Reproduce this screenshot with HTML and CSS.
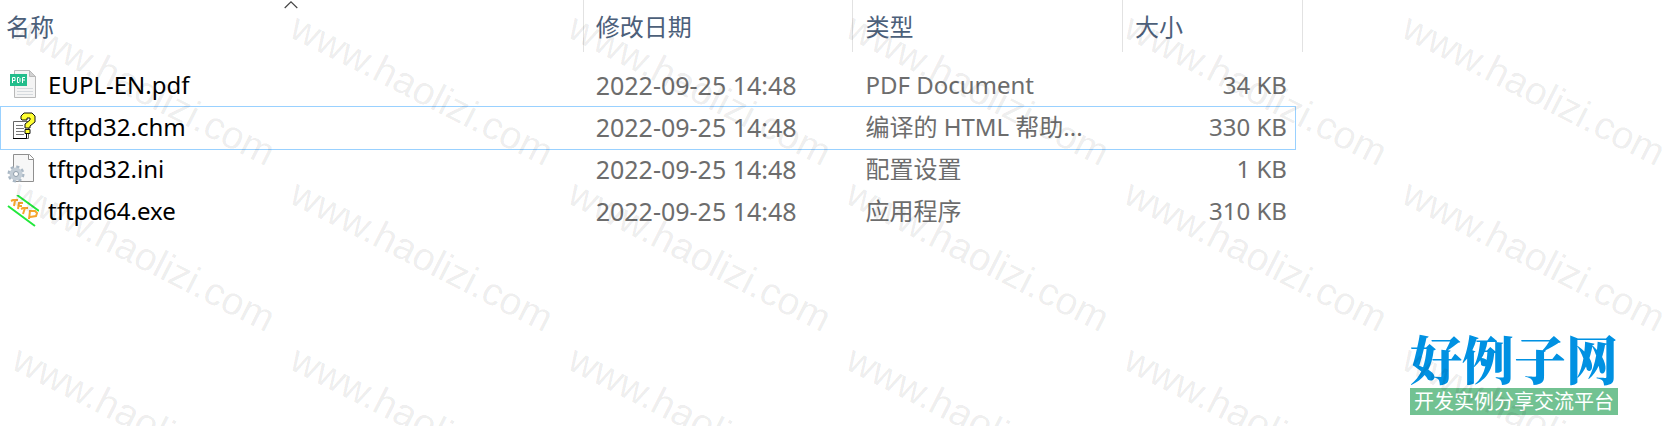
FILE: index.html
```html
<!DOCTYPE html>
<html lang="zh-CN">
<head>
  <meta charset="UTF-8" />
  <meta name="viewport" content="width=device-width, initial-scale=1.0"/>
  <title>tftpd64</title>
  <link rel="stylesheet" href="styles.css">
</head>
<body>
  <table class="files">
    <colgroup>
      <col class="col-name">
      <col class="col-date">
      <col class="col-type">
      <col class="col-size">
    </colgroup>
    <thead>
      <tr>
        <th aria-sort="ascending">
          <button type="button">名称</button>
          <svg class="sort" width="14" height="8" viewBox="0 0 14 8"><path d="M.7 7 7 .9 13.3 7" fill="none" stroke="#444" stroke-width="1.2"/></svg>
        </th>
        <th><button type="button">修改日期</button></th>
        <th><button type="button">类型</button></th>
        <th><button type="button">大小</button></th>
      </tr>
    </thead>
    <tbody>
      <tr>
        <td>
          <div class="name">
            <svg class="icon" width="32" height="32" viewBox="0 0 32 32">
              <path d="M7.5 1.500h15l6 6v21h-21z" fill="#f4f4f4" stroke="#b9b9b9"/>
              <path d="M22.500 1.500v6h6z" fill="#d2d2d2" stroke="#b9b9b9"/>
              <path d="M10 19.500h16M10 22.500h16M10 25.500h16" stroke="#d5d9dd"/>
              <path d="M3 5h17v12H3z" fill="#22bd8b"/>
              <path d="M5.500 14V8.500h2.500v3H5.500M10.500 8.500v5h1.500l1-1v-3l-1-1zM15.500 14V8.500H18M15.500 11H18" fill="none" stroke="#fff"/>
            </svg>
            EUPL-EN.pdf
          </div>
        </td>
        <td class="date">2022-09-25 14:48</td>
        <td>PDF Document</td>
        <td>34 KB</td>
      </tr>
      <tr class="selected">
        <td>
          <div class="name">
            <svg class="icon" width="32" height="32" viewBox="0 0 32 32">
              <path d="M6.500 10.500h15v17h-15z" fill="#fff" stroke="#666"/>
              <path d="M6 27.500h13.500v-5" fill="none" stroke="#000"/>
              <path d="M9 14.500h7M9 17.500h8M9 20.500h8M9 23.500h8" stroke="#777"/>
              <path d="M14 8V5l3-3h8l3 3v6l-5 4v2h-5v-4l5-4V7h-3v2h-5zM18 18.500h5v4h-5z" fill="#ffff32" stroke="#111"/>
            </svg>
            tftpd32.chm
          </div>
        </td>
        <td class="date">2022-09-25 14:48</td>
        <td>编译的 HTML 帮助...</td>
        <td>330 KB</td>
      </tr>
      <tr>
        <td>
          <div class="name">
            <svg class="icon" width="32" height="32" viewBox="0 0 32 32">
              <path d="M6.500 1.500h16l4 4v23h-20z" fill="#f7f7f7" stroke="#8f8f8f"/>
              <path d="M21.500 1.500v5h5" fill="#fff" stroke="#8f8f8f"/>
              <circle cx="9" cy="21" r="7" fill="none" stroke="#a9b7c4" stroke-width="3" stroke-dasharray="3 2.500"/>
              <circle cx="9" cy="21" r="4.500" fill="#eef2f5" stroke="#c3cdd6" stroke-width="4"/>
              <circle cx="9" cy="21" r="2.500" fill="#fff" stroke="#8c9ba8"/>
            </svg>
            tftpd32.ini
          </div>
        </td>
        <td class="date">2022-09-25 14:48</td>
        <td>配置设置</td>
        <td>1 KB</td>
      </tr>
      <tr>
        <td>
          <div class="name">
            <svg class="icon" width="32" height="32" viewBox="0 0 32 32">
              <path d="M10 0 32 16M1 11l27 20" stroke="#22e83c" stroke-width="2"/>
              <path d="M4 6l2-1h5M8 5l-1 6M11 14l1-6h4M11 11h4M14 14l2-1h5M18 13l-2 6M22 24l1-8h5l2 2-1 3-6 1" fill="none" stroke="#f5a52d" stroke-width="2"/>
            </svg>
            tftpd64.exe
          </div>
        </td>
        <td class="date">2022-09-25 14:48</td>
        <td>应用程序</td>
        <td>310 KB</td>
      </tr>
    </tbody>
  </table>

  <div class="brand">
    <div class="brand-name">好例子网</div>
    <div class="brand-slogan">开发实例分享交流平台</div>
  </div>

  <div class="watermark" aria-hidden="true">
    <span>www.haolizi.com</span><span>www.haolizi.com</span><span>www.haolizi.com</span>
    <span>www.haolizi.com</span><span>www.haolizi.com</span><span>www.haolizi.com</span>
    <span>www.haolizi.com</span><span>www.haolizi.com</span><span>www.haolizi.com</span>
    <span>www.haolizi.com</span><span>www.haolizi.com</span><span>www.haolizi.com</span>
    <span>www.haolizi.com</span><span>www.haolizi.com</span><span>www.haolizi.com</span>
    <span>www.haolizi.com</span><span>www.haolizi.com</span><span>www.haolizi.com</span>
  </div>
</body>
</html>
```
FILE: styles.css
```css
* { box-sizing: border-box; }
body {
  margin: 0;
  min-height: 100vh;
  position: relative;
  overflow: hidden;
  background: #fff;
  color: #6d6d6d;
  font-family: "Noto Sans", "Noto Sans CJK SC", sans-serif;
  font-size: 24px;
  line-height: 32px;
}
.files {
  width: 78.3%;
  table-layout: fixed;
  border-collapse: separate;
  border-spacing: 0;
}
.col-name { width: 44.8%; }
.col-date, .col-type { width: 20.7%; }
.col-size { width: 13.8%; }
th {
  position: relative;
  height: 52px;
  padding: 1px 0 0 6px;
  text-align: left;
  border-right: 1px solid #e2e2e2;
}
th + th { padding-left: 12px; }
th button {
  padding: 0;
  border: none;
  background: none;
  color: #4c607a;
  font: inherit;
  font-weight: normal;
  cursor: pointer;
}
.sort {
  position: absolute;
  top: 1px;
  left: 50%;
  transform: translateX(-50%);
}
tbody::before {
  content: "";
  display: block;
  height: 12px;
}
td {
  height: 42px;
  padding: 0 0 0 12px;
  white-space: nowrap;
}
td:first-child {
  padding-left: 7px;
  color: #000;
}
td:last-child {
  padding-right: 16px;
  text-align: right;
}
.date { font-size: 25px; }
.name {
  display: flex;
  align-items: center;
  gap: 9px;
}
.icon { flex: none; }
.selected { position: relative; }
/* the frame overlaps the neighbouring rows by a pixel */
.selected td:first-child::after {
  content: "";
  position: absolute;
  inset: 0 7px -2px 0;
  border: 1px solid #99d1ff;
}
.brand {
  position: absolute;
  right: 46px;
  bottom: 11px;
  text-align: center;
}
.brand-name {
  color: #0091e2;
  font-family: "Noto Serif CJK SC", "Noto Sans CJK SC", sans-serif;
  font-size: 52px;
  font-weight: 900;
  line-height: 60px;
}
.brand-slogan {
  background: #72c292;
  color: #fff;
  font-size: 20px;
  line-height: 27px;
}
.watermark {
  position: absolute;
  inset: 0;
  display: grid;
  grid-template-columns: repeat(6, 278px);
  grid-auto-rows: 166px;
  padding-top: 3px;
  overflow: hidden;
  pointer-events: none;
  color: rgba(0, 0, 0, 0.08);
  font-family: "Liberation Sans", sans-serif;
  font-size: 39px;
  line-height: 40px;
}
.watermark span {
  padding-left: 10px;
  transform: rotate(27deg);
  transform-origin: 10px 32px;
}
```
